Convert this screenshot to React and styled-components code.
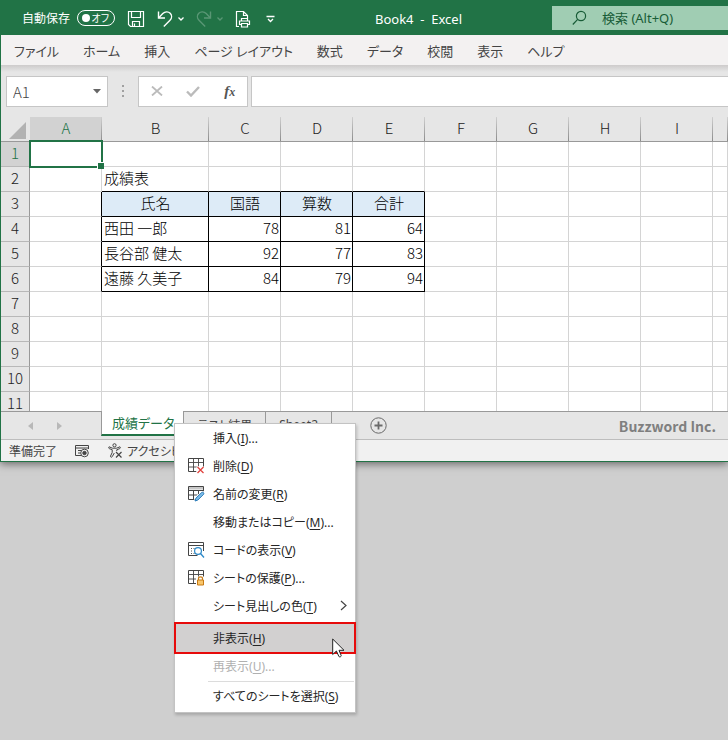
import React from 'react';
import styled, { createGlobalStyle, css } from 'styled-components';

const columns = ['A', 'B', 'C', 'D', 'E', 'F', 'G', 'H', 'I', ''];
const widths = [72, 107, 72, 72, 72, 72, 72, 72, 72];
const rowNumbers = [1, 2, 3, 4, 5, 6, 7, 8, 9, 10, 11];

const cells = {
  B2: '成績表',
  B3: '氏名', C3: '国語', D3: '算数', E3: '合計',
  B4: '西田 一郎', C4: 78, D4: 81, E4: 64,
  B5: '長谷部 健太', C5: 92, D5: 77, E5: 83,
  B6: '遠藤 久美子', C6: 84, D6: 79, E6: 94,
};

const ribbonTabs = ['ファイル', 'ホーム', '挿入', 'ページ レイアウト', '数式', 'データ', '校閲', '表示', 'ヘルプ'];

const menuItems = [
  { label: '挿入', keyName: 'I', dots: true },
  { label: '削除', keyName: 'D', icon: 'delete' },
  { label: '名前の変更', keyName: 'R', icon: 'rename' },
  { label: '移動またはコピー', keyName: 'M', dots: true },
  { label: 'コードの表示', keyName: 'V', icon: 'code' },
  { label: 'シートの保護', keyName: 'P', dots: true, icon: 'protect' },
  { label: 'シート見出しの色', keyName: 'T', submenu: true },
  { label: '非表示', keyName: 'H', marked: true },
  { label: '再表示', keyName: 'U', dots: true, disabled: true },
  { divider: true },
  { label: 'すべてのシートを選択', keyName: 'S' },
];

function SaveIcon() {
  return (
    <svg width="18" height="18" viewBox="0 0 18 18" fill="none" stroke="#fff" strokeWidth="1.2">
      <path d="M1.5 1.5h15v15h-13l-2-2z" />
      <path d="M4.500 1.500v6h9v-6M5.500 16.500v-5h7v5M7.500 13.500v3" />
    </svg>
  );
}

function UndoIcon({ flip }) {
  return (
    <svg width="16" height="18" viewBox="0 0 16 18" fill="none" stroke="#fff" strokeWidth="1.400">
      <g transform={flip ? 'translate(16 0) scale(-1 1)' : undefined}>
        <path d="M1.500 1.500v6.500h6.500" />
        <path d="M1.800 7.700 5.800 3.600C8 1.400 11.300 1.300 13.200 3.300c1.900 2 1.800 5-.2 7L6.800 16.500" />
      </g>
    </svg>
  );
}

function CaretIcon() {
  return (
    <svg width="6" height="4" viewBox="0 0 6 4" fill="none" stroke="#fff" strokeWidth="1.300">
      <path d="M.5.5 3 3 5.500.5" />
    </svg>
  );
}

function PrintIcon() {
  return (
    <svg width="16" height="18" viewBox="0 0 16 18" fill="none" stroke="#fff" strokeWidth="1.200">
      <path d="M4 16.500H1.500v-15h7l4 4v3M8.500 1.500v4h4" />
      <path d="M6.500 11V8.500h6V11M6.500 14.500h-2V11h10v3.500h-2M6.500 13.500h6v3.500h-6z" />
    </svg>
  );
}

function CustomizeIcon() {
  return (
    <svg width="14" height="8" viewBox="0 0 14 8" fill="none" stroke="#fff" strokeWidth="1.300">
      <path d="M3.500 1.500h8M5 4l2.500 2.500L10 4" />
    </svg>
  );
}

function SearchIcon() {
  return (
    <svg width="15" height="16" viewBox="0 0 15 16" fill="none" stroke="#185c37" strokeWidth="1.200">
      <circle cx="9" cy="6" r="4.600" />
      <path d="M5.700 9.300.8 14.500" />
    </svg>
  );
}

function SheetGrid() {
  return (
    <>
      <path d="M.5.5h15v11M.5.5v13h8" stroke="#444" />
      <path d="M.5 4.500h15M.5 9h9M5.500.5v13M10.500.5v8" stroke="#444" strokeWidth=".9" />
    </>
  );
}

function MenuIcon({ name }) {
  return (
    <svg width="17" height="16" viewBox="0 0 17 16" fill="none">
      {name === 'delete' && (
        <>
          <SheetGrid />
          <path d="M8.500 8.500h8v7.500h-8z" fill="#fff" />
          <path d="m9.500 9 6 6m0-6-6 6" stroke="#e0423e" strokeWidth="1.300" />
        </>
      )}
      {name === 'rename' && (
        <>
          <path d="M.5.5h15v3H.5z" fill="#c8c8c8" />
          <path d="M.5.5h15v5M.5.5v13h6M.5 4.500h15M.5 9h9M5.500 4.500v9M10.500 4.500v4" stroke="#444" />
          <path d="M6 16 7.300 11l6.200-5.500h3.500v5L10 16z" fill="#fff" />
          <path d="m7 15 .9-2.800 5.800-5.700c1.300-.9 2.700.5 1.900 1.800l-5.800 5.800z" fill="#7cbce8" stroke="#2b7cb9" />
        </>
      )}
      {name === 'code' && (
        <>
          <path d="M15.500 9V.5H.5v13h9M.5 3.500h15" stroke="#444" />
          <path d="M3 6.500h1M3 9h1M3 11.500h1M5.500 6.500h1M5.500 11.500h1" stroke="#555" />
          <circle cx="10" cy="9" r="3.400" fill="#fff" stroke="#2b88c8" strokeWidth="1.200" />
          <path d="m12.500 11.500 3.500 4" stroke="#2b88c8" strokeWidth="1.400" />
        </>
      )}
      {name === 'protect' && (
        <>
          <SheetGrid />
          <path d="M8 6.500h9V16H8z" fill="#fff" />
          <path d="M10.500 10V8.500c0-2.300 4-2.300 4 0V10" stroke="#c77a14" strokeWidth="1.200" />
          <path d="M9.500 10h6v5h-6z" fill="#f9c66b" stroke="#c77a14" />
        </>
      )}
    </svg>
  );
}

function MacroIcon() {
  return (
    <svg width="15" height="14" viewBox="0 0 15 14" fill="none" stroke="#444">
      <path d="M13.500 5V1.500H.5v10h6M.5 4h13M3 6.500h3M3 9h2.500" />
      <circle cx="9.500" cy="9" r="3.800" fill="#f1f1f1" />
      <circle cx="9.500" cy="9" r="1.700" fill="#444" />
    </svg>
  );
}

function AccessibilityIcon() {
  return (
    <svg width="15" height="15" viewBox="0 0 15 15" fill="none" stroke="#444">
      <circle cx="6.500" cy="2.300" r="1.600" />
      <path d="M1 3.800c-.8.700-.4 1.500.5 1.900l2.700 1v2.800l-1.700 3.600c-.3 1.100 1.200 1.500 1.700.6L6.300 10M12 3.800c.8.700.4 1.500-.5 1.900l-2.700 1v1.300M1 3.800l3.500 1.400h4L12 3.800" />
      <path d="m8 9 5.500 5.500M13.500 9 8 14.500" strokeWidth="1.200" />
    </svg>
  );
}

function Cell({ name, row, col }) {
  const value = cells[name];
  const inTable = row >= 3 && row <= 6 && col >= 1 && col <= 4;
  const blackRight = row >= 3 && row <= 6 && col <= 4;
  const blackBottom = row >= 2 && row <= 6 && col >= 1 && col <= 4;
  return (
    <DataCell
      $head={inTable && row === 3}
      $number={typeof value === 'number'}
      $right={blackRight}
      $bottom={blackBottom}
    >
      {value}
      {name === 'A1' && <Selection />}
    </DataCell>
  );
}

function ContextMenu() {
  return (
    <Menu role="menu">
      {menuItems.map((item, i) => item.divider ? <Divider key={i} /> : (
        <MenuButton key={i} type="button" role="menuitem" disabled={item.disabled} $marked={item.marked}>
          <IconSlot>{item.icon && <MenuIcon name={item.icon} />}</IconSlot>
          <span>{item.label}(<u>{item.keyName}</u>){item.dots && '...'}</span>
          {item.submenu && (
            <SubmenuArrow width="7" height="12" viewBox="0 0 7 12" fill="none" stroke="#444" strokeWidth="1.200">
              <path d="m1 1 5 4.500L1 10" />
            </SubmenuArrow>
          )}
          {item.marked && (
            <Pointer width="13" height="20" viewBox="0 0 13 20" fill="#fff" stroke="#222">
              <path d="M.7 1v15.500l3.700-3.500 2.500 5.500c.8.800 2.500.2 2.300-1L7 12.300h5z" />
            </Pointer>
          )}
        </MenuButton>
      ))}
    </Menu>
  );
}

function App() {
  return (
    <Desktop>
      <GlobalStyle />
      <Window>
        <TitleBar>
          <AutoSave>
            自動保存
            <input type="checkbox" role="switch" />
            <Switch aria-hidden="true">オフ</Switch>
          </AutoSave>
          <QuickTools>
            <ToolButton type="button" aria-label="上書き保存"><SaveIcon /></ToolButton>
            <ToolButton type="button" aria-label="元に戻す"><UndoIcon /><CaretIcon /></ToolButton>
            <ToolButton type="button" aria-label="やり直し" disabled><UndoIcon flip /><CaretIcon /></ToolButton>
            <ToolButton type="button" aria-label="印刷プレビュー"><PrintIcon /></ToolButton>
            <ToolButton type="button" aria-label="カスタマイズ"><CustomizeIcon /></ToolButton>
          </QuickTools>
          <DocTitle>Book4&nbsp; -&nbsp; Excel</DocTitle>
          <SearchBox>
            <SearchIcon />
            <input type="text" aria-label="検索" placeholder="検索 (Alt+Q)" />
          </SearchBox>
        </TitleBar>

        <Ribbon>
          {ribbonTabs.map((tab) => <RibbonTab key={tab} type="button">{tab}</RibbonTab>)}
        </Ribbon>

        <FormulaBar>
          <NameBox>
            <input type="text" aria-label="名前ボックス" defaultValue="A1" />
            <button type="button" aria-label="名前の一覧">
              <svg width="8" height="5" viewBox="0 0 8 5"><path d="M0 0h8L4 4.500z" fill="#666" /></svg>
            </button>
          </NameBox>
          <svg width="30" height="12" viewBox="0 0 30 12" fill="#a0a0a0">
            <path d="M14 0h2v2h-2zM14 5h2v2h-2zM14 10h2v2h-2z" />
          </svg>
          <FormulaButtons>
            <button type="button" aria-label="キャンセル" disabled>
              <svg width="12" height="10" viewBox="0 0 12 10" stroke="#bbb" strokeWidth="1.800"><path d="m1 .5 10 9m0-9-10 9" /></svg>
            </button>
            <button type="button" aria-label="入力" disabled>
              <svg width="14" height="11" viewBox="0 0 14 11" fill="none" stroke="#bbb" strokeWidth="2.400"><path d="m1 5.500 4 4L13 1" /></svg>
            </button>
            <button type="button" aria-label="関数の挿入"><Fx>f<small>x</small></Fx></button>
          </FormulaButtons>
          <FormulaInput type="text" aria-label="数式バー" />
        </FormulaBar>

        <GridView>
          <Grid>
            <colgroup>
              <col style={{ width: 29 }} />
              {widths.map((w, i) => <col key={i} style={{ width: w }} />)}
              <col />
            </colgroup>
            <thead>
              <tr>
                <Corner>
                  <svg width="17" height="17" viewBox="0 0 17 17"><path d="M17 0v17H0z" fill="#b2b2b2" /></svg>
                </Corner>
                {columns.map((c, i) => <ColHead key={i} scope="col" $active={i === 0}>{c}</ColHead>)}
              </tr>
            </thead>
            <tbody>
              {rowNumbers.map((n) => (
                <tr key={n}>
                  <RowHead scope="row" $active={n === 1}>{n}</RowHead>
                  {columns.map((c, i) => <Cell key={i} name={c + n} row={n} col={i} />)}
                </tr>
              ))}
            </tbody>
          </Grid>
        </GridView>

        <SheetBar>
          <SheetNav>
            <button type="button" aria-label="前のシート"><svg width="5" height="8" viewBox="0 0 5 8"><path d="M5 0v8L0 4z" fill="#b8b8b8" /></svg></button>
            <button type="button" aria-label="次のシート"><svg width="5" height="8" viewBox="0 0 5 8"><path d="M0 0v8l5-4z" fill="#b8b8b8" /></svg></button>
          </SheetNav>
          <SheetTab type="button" $active>成績データ</SheetTab>
          <SheetTab type="button">テスト結果</SheetTab>
          <SheetTab type="button">Sheet2</SheetTab>
          <AddSheet type="button" aria-label="新しいシート">
            <svg width="17" height="17" viewBox="0 0 17 17" fill="none" stroke="#6a6a6a">
              <circle cx="8.500" cy="8.500" r="7.700" />
              <path d="M8.500 4.500v8M4.500 8.500h8" strokeWidth="1.800" />
            </svg>
          </AddSheet>
          <Brand>Buzzword Inc.</Brand>
          <ContextMenu />
        </SheetBar>

        <StatusBar>
          <span>準備完了</span>
          <MacroIcon />
          <Accessibility><AccessibilityIcon />アクセシビリティ</Accessibility>
        </StatusBar>
      </Window>
    </Desktop>
  );
}

const GlobalStyle = createGlobalStyle`
* {
  box-sizing: border-box;
}

body {
  margin: 0;
  background: #cfcfcf;
  font-family: "Noto Sans", "Noto Sans CJK JP", sans-serif;
  font-size: 12px;
  font-feature-settings: "palt";
  color: #262626;
}

button, input {
  font: inherit;
  font-feature-settings: inherit;
  color: inherit;
  padding: 0;
  margin: 0;
  border: none;
  background: none;
}

svg {
  display: block;
  flex: none;
}
`;

const Desktop = styled.div`
min-height: 100vh;
background: #cfcfcf;
`;

const Window = styled.div`
border-left: 1px solid #217346;
border-bottom: 1px solid #217346;
box-shadow: 0 2px 8px rgba(0, 0, 0, 0.5);
`;

const TitleBar = styled.header`
display: flex;
align-items: center;
height: 35px;
margin-left: -1px;
padding-left: 22px;
background: #217346;
color: #fff;
`;

const Switch = styled.span`
display: flex;
align-items: center;
justify-content: flex-end;
width: 38px;
height: 16px;
padding-right: 5px;
border: 1px solid #fff;
border-radius: 8px;
font-size: 10px;
position: relative;

&::before {
  content: "";
  position: absolute;
  left: 4px;
  top: 3px;
  width: 8px;
  height: 8px;
  border-radius: 50%;
  background: #fff;
}
`;

const AutoSave = styled.label`
display: flex;
align-items: center;
gap: 7px;
position: relative;
white-space: nowrap;

input {
  position: absolute;
  right: 0;
  width: 38px;
  height: 16px;
  opacity: 0;
}
`;

const QuickTools = styled.div`
display: flex;
align-items: center;
gap: 12px;
padding: 2px 0 0 12px;
`;

const ToolButton = styled.button`
display: flex;
align-items: center;
gap: 5px;

&:disabled {
  opacity: 0.25;
}
`;

const DocTitle = styled.div`
flex: 1;
padding: 3px 0 0 8px;
font-size: 13px;
text-align: center;
white-space: nowrap;
`;

const SearchBox = styled.label`
display: flex;
align-items: center;
gap: 15px;
width: 176px;
height: 24px;
padding-left: 20px;
background: #a0cdb3;
font-size: 13px;

input {
  flex: 1;
  min-width: 0;
  outline: none;
}

input::placeholder {
  color: #185c37;
  opacity: 1;
}
`;

const Ribbon = styled.nav`
display: flex;
gap: 24px;
height: 30px;
padding: 0 13px;
background: #f3f1f1;
`;

const RibbonTab = styled.button`
font-size: 13px;
white-space: nowrap;
color: #444;
`;

const FormulaBar = styled.div`
display: flex;
align-items: center;
height: 52px;
padding: 0 0 0 5px;
background: linear-gradient(#cdcbcb, #e6e6e6 7px);
`;

const NameBox = styled.div`
display: flex;
align-items: center;
width: 102px;
height: 31px;
padding: 0 6px;
border: 1px solid #c6c6c6;
background: #fff;

input {
  flex: 1;
  min-width: 0;
  font-family: "Noto Sans CJK JP", sans-serif;
  font-size: 15px;
  font-weight: 300;
  color: #444;
}
`;

const FormulaButtons = styled.div`
display: flex;
align-items: center;
justify-content: space-around;
width: 110px;
height: 31px;
margin-right: 3px;
border: 1px solid #c6c6c6;
background: #fff;
`;

const Fx = styled.i`
font-family: "Liberation Serif", serif;
font-size: 15px;
font-weight: bold;
color: #555;

small {
  font-size: 12px;
}
`;

const FormulaInput = styled.input`
flex: 1;
min-width: 0;
height: 31px;
border: 1px solid #c6c6c6;
border-right: none;
background: #fff;
`;

// viewport over the sheet, the last row is cut off by the tab bar
const GridView = styled.div`
height: 294px;
overflow: hidden;
background: #fff;
`;

const Grid = styled.table`
width: 100%;
table-layout: fixed;
border-collapse: separate;
border-spacing: 0;
font-family: "Noto Sans CJK JP", sans-serif;
font-size: 15px;
font-weight: 300;
font-feature-settings: normal;
line-height: 22px;
color: #000;

tr {
  height: 25px;
}

th, td {
  height: 25px;
  padding: 0 0 2px;
  font-weight: 300;
  white-space: nowrap;
}
`;

const headLook = css`
color: ${({ $active }) => ($active ? '#217346' : '#222')};
background-color: ${({ $active }) => ($active ? '#d2d2d2' : '#e6e6e6')};
`;

const Corner = styled.td`
background: #e6e6e6;
border-bottom: 1px solid #999;

svg {
  margin: 4px 0 0 8px;
}
`;

const ColHead = styled.th`
${headLook}
border-bottom: 1px solid #999;
background-image: linear-gradient(#d0d0d0, #8c8c8c);
background-size: 1px 100%;
background-position: right top;
background-repeat: no-repeat;
`;

const RowHead = styled.th`
${headLook}
border-right: 1px solid #999;
border-bottom: 1px solid #b8b8b8;
`;

const DataCell = styled.td`
position: relative;
border-right: 1px solid ${({ $right }) => ($right ? '#000' : '#d4d4d4')};
border-bottom: 1px solid ${({ $bottom }) => ($bottom ? '#000' : '#d4d4d4')};
background: ${({ $head }) => ($head ? '#ddebf7' : '#fff')};
text-align: ${({ $head, $number }) => ($head ? 'center' : $number ? 'right' : 'left')};

&& {
  padding: 0 1px 2px 2px;
}
`;

const Selection = styled.div`
position: absolute;
inset: -2px -2px -2px -1px;
z-index: 1;
border: 2px solid #217346;

&::after {
  content: "";
  position: absolute;
  right: -3px;
  bottom: -3px;
  width: 6px;
  height: 6px;
  border: 1px solid #fff;
  border-width: 1px 0 0 1px;
  background: #217346;
}
`;

const SheetBar = styled.div`
display: flex;
position: relative;
height: 29px;
border-top: 1px solid #999;
border-bottom: 1px solid #bdbdbd;
background: #e6e6e6;
`;

const SheetNav = styled.div`
display: flex;
align-items: center;
gap: 24px;
width: 100px;
padding-left: 27px;
`;

const SheetTab = styled.button`
height: 25px;
padding: 0 13px;
white-space: nowrap;
color: #444;
border-right: 1px solid #999;

${({ $active }) => $active && css`
  margin-top: -1px;
  padding: 0 9px 0 10px;
  border-left: 1px solid #999;
  border-bottom: 2px solid #217346;
  background: #fff;
  color: #217346;
  font-size: 13px;
`}
`;

const AddSheet = styled.button`
margin-left: 38px;
`;

const Brand = styled.div`
margin-left: auto;
padding-right: 12px;
font-family: "Noto Sans CJK JP", sans-serif;
font-size: 14px;
font-weight: bold;
line-height: 29px;
color: #7f7f7f;
`;

const StatusBar = styled.footer`
display: flex;
align-items: center;
gap: 18px;
height: 21px;
padding-left: 8px;
background: #f1f1f1;
color: #444;
white-space: nowrap;
`;

const Accessibility = styled.span`
display: flex;
align-items: center;
gap: 4px;
`;

const Menu = styled.div`
position: absolute;
left: 173px;
top: 11px;
z-index: 2;
width: 182px;
padding-bottom: 2px;
border: 1px solid #c3c3c3;
background: #fff;
box-shadow: 1px 2px 3px rgba(0, 0, 0, 0.2);
`;

const MenuButton = styled.button`
display: flex;
align-items: center;
position: relative;
width: 100%;
height: 28px;
text-align: left;
white-space: nowrap;

&:disabled {
  color: #b0b0b0;
}

u {
  text-underline-offset: 2px;
}

${({ $marked }) => $marked && css`
  width: calc(100% + 2px);
  height: 32px;
  margin: 2px -1px -2px;
  padding-left: 1px;
  border: 2px solid #e60b0b;
  background: #d2d0d0;

  span:first-child {
    width: 36px;
  }
`}
`;

const IconSlot = styled.span`
display: block;
flex: none;
width: 38px;
padding-left: 13px;
`;

const SubmenuArrow = styled.svg`
margin: 0 8px 0 auto;
`;

const Pointer = styled.svg`
position: absolute;
right: 9px;
top: 14px;
z-index: 1;
`;

const Divider = styled.hr`
height: 1px;
margin: 1px 1px 0 33px;
border: none;
background: #dcdcdc;
`;

export default App;
